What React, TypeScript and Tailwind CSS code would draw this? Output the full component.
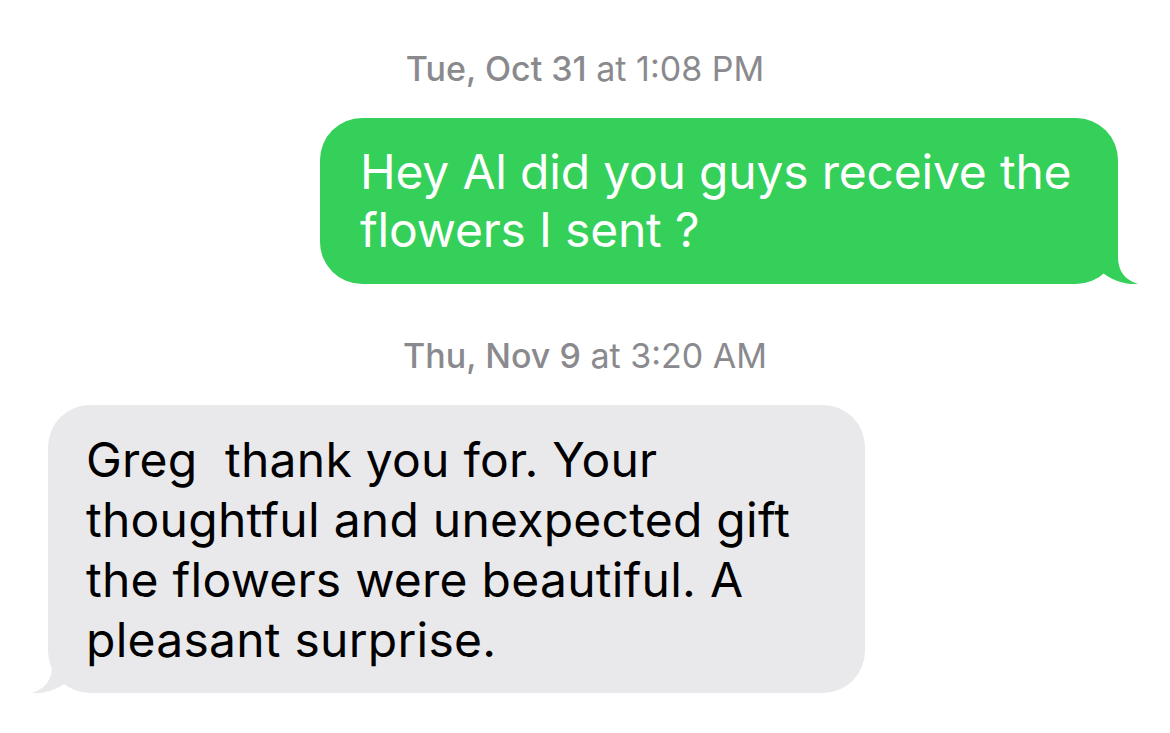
import type { ReactNode } from 'react'

function Timestamp({ day, time }: { day: string; time: string }) {
  return (
    <div className="text-center text-[34px] leading-[40px] text-[#8a8a8e]">
      <span className="font-medium">{day}</span> {time}
    </div>
  )
}

function Tail({ side, color }: { side: 'left' | 'right'; color: string }) {
  return (
    <svg
      width="45"
      height="45"
      viewBox="0 0 45 45"
      className={
        side === 'right'
          ? 'absolute right-[-20px] bottom-0'
          : 'absolute left-[-16px] bottom-0 -scale-x-100'
      }
    >
      <path
        d="M0 0 H25 V18 C25 32 32 41 45 45 C33 46 20 42 10 34 L0 20 Z"
        fill={color}
      />
    </svg>
  )
}

function Bubble({
  children,
  side,
  className
}: {
  children: ReactNode
  side: 'left' | 'right'
  className: string
}) {
  const color = side === 'right' ? '#35d05a' : '#e9e9eb'
  return (
    <div className={`relative rounded-[42px] ${className}`}>
      {children}
      <Tail side={side} color={color} />
    </div>
  )
}

export default function App() {
  return (
    <div
      className="w-[1170px] h-[733px] bg-white overflow-hidden flex flex-col"
      style={{ fontFamily: 'Inter, "Noto Sans", sans-serif' }}
    >
      {/* first day */}
      <div className="pt-[49px]">
        <Timestamp day="Tue, Oct 31" time="at 1:08 PM" />
      </div>

      <div className="flex justify-end pr-[52px] mt-[29px]">
        <Bubble
          side="right"
          className="w-[798px] bg-[#35d05a] text-white pl-[40px] pt-[25px] pb-[25px] text-[48px] leading-[58px] tracking-[-0.2px]"
        >
          <div>Hey Al did you guys receive the</div>
          <div>flowers I sent ?</div>
        </Bubble>
      </div>

      {/* second day */}
      <div className="mt-[52px]">
        <Timestamp day="Thu, Nov 9" time="at 3:20 AM" />
      </div>

      <div className="flex justify-start pl-[48px] mt-[29px]">
        <Bubble
          side="left"
          className="w-[817px] bg-[#e9e9eb] text-black pl-[38px] pt-[25px] pb-[23px] text-[48px] leading-[60px] tracking-[0.25px]"
        >
          <div className="whitespace-pre">Greg  thank you for. Your</div>
          <div>thoughtful and unexpected gift</div>
          <div>the flowers were beautiful. A</div>
          <div>pleasant surprise.</div>
        </Bubble>
      </div>
    </div>
  )
}
